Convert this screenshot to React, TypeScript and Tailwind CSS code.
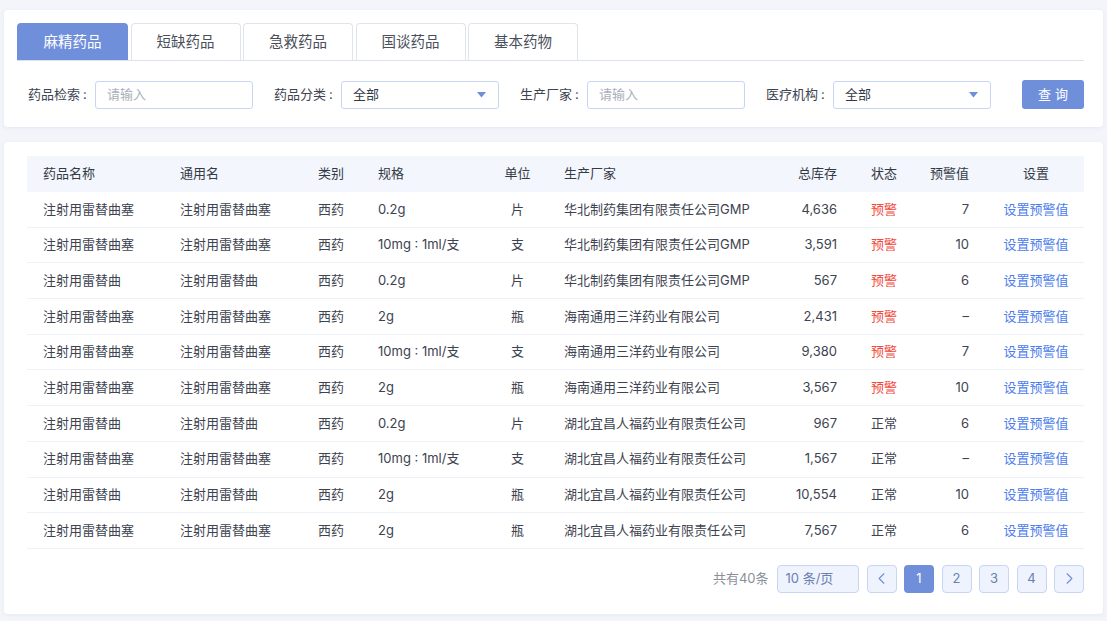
import { ChevronLeft, ChevronRight } from 'lucide-react';

const tabs = ['麻精药品', '短缺药品', '急救药品', '国谈药品', '基本药物'];

type Row = {
  name: string;
  generic: string;
  kind: string;
  spec: string;
  unit: string;
  maker: string;
  stock: string;
  warn: boolean;
  limit: string;
};

const rows: Row[] = [
  { name: '注射用雷替曲塞', generic: '注射用雷替曲塞', kind: '西药', spec: '0.2g', unit: '片', maker: '华北制药集团有限责任公司GMP', stock: '4,636', warn: true, limit: '7' },
  { name: '注射用雷替曲塞', generic: '注射用雷替曲塞', kind: '西药', spec: '10mg : 1ml/支', unit: '支', maker: '华北制药集团有限责任公司GMP', stock: '3,591', warn: true, limit: '10' },
  { name: '注射用雷替曲', generic: '注射用雷替曲', kind: '西药', spec: '0.2g', unit: '片', maker: '华北制药集团有限责任公司GMP', stock: '567', warn: true, limit: '6' },
  { name: '注射用雷替曲塞', generic: '注射用雷替曲塞', kind: '西药', spec: '2g', unit: '瓶', maker: '海南通用三洋药业有限公司', stock: '2,431', warn: true, limit: '–' },
  { name: '注射用雷替曲塞', generic: '注射用雷替曲塞', kind: '西药', spec: '10mg : 1ml/支', unit: '支', maker: '海南通用三洋药业有限公司', stock: '9,380', warn: true, limit: '7' },
  { name: '注射用雷替曲塞', generic: '注射用雷替曲塞', kind: '西药', spec: '2g', unit: '瓶', maker: '海南通用三洋药业有限公司', stock: '3,567', warn: true, limit: '10' },
  { name: '注射用雷替曲', generic: '注射用雷替曲', kind: '西药', spec: '0.2g', unit: '片', maker: '湖北宜昌人福药业有限责任公司', stock: '967', warn: false, limit: '6' },
  { name: '注射用雷替曲塞', generic: '注射用雷替曲塞', kind: '西药', spec: '10mg : 1ml/支', unit: '支', maker: '湖北宜昌人福药业有限责任公司', stock: '1,567', warn: false, limit: '–' },
  { name: '注射用雷替曲', generic: '注射用雷替曲', kind: '西药', spec: '2g', unit: '瓶', maker: '湖北宜昌人福药业有限责任公司', stock: '10,554', warn: false, limit: '10' },
  { name: '注射用雷替曲塞', generic: '注射用雷替曲塞', kind: '西药', spec: '2g', unit: '瓶', maker: '湖北宜昌人福药业有限责任公司', stock: '7,567', warn: false, limit: '6' },
];

const gridCols = 'grid grid-cols-[137px_138px_60px_125px_61px_212px_93px_62px_70px_1fr] items-center';

function Field({ label, placeholder, select }: { label: string; placeholder?: string; select?: boolean }) {
  return (
    <div className="flex items-center">
      <span className="text-[13px] text-[#3d4350] w-[67px] whitespace-nowrap">
        {label}
        <span className="ml-[3px]">:</span>
      </span>
      <div className="w-[158px] h-[28px] border border-[#c8d5f3] rounded-[3px] bg-white flex items-center justify-between px-[11px]">
        {select ? (
          <>
            <span className="text-[13px] text-[#333a46]">全部</span>
            <svg width="9" height="6" viewBox="0 0 9 6" className="mr-[1px]">
              <path d="M0 0 H9 L4.5 5.5 Z" fill="#6f8fda" />
            </svg>
          </>
        ) : (
          <span className="text-[13px] text-[#a9afba]">{placeholder}</span>
        )}
      </div>
    </div>
  );
}

export default function App() {
  return (
    <div
      className="min-h-screen bg-[#f3f5fa] pt-[10px] px-[4px] pb-[7px]"
      style={{ fontFamily: 'Inter, "Noto Sans CJK SC", sans-serif' }}
    >
      <div className="bg-white rounded-[4px] shadow-[0_1px_4px_rgba(120,140,190,0.12)] pt-[13px] pl-[13px] pr-[19px] h-[117px]">
        <div className="flex gap-[2.5px] border-b border-[#dde2ec] h-[38px]">
          {tabs.map((t, i) => (
            <div
              key={t}
              className={
                i === 0
                  ? 'w-[111px] h-[37px] flex items-center justify-center rounded-t-[4px] bg-[#6f8fda] text-white text-[14.5px]'
                  : 'w-[110px] h-[37px] flex items-center justify-center rounded-t-[4px] border border-b-0 border-[#e0e4ec] bg-white text-[#4a4f5a] text-[14.5px]'
              }
            >
              {t}
            </div>
          ))}
        </div>
        <div className="flex items-center mt-[19px] pl-[11px] gap-[21px]">
          <Field label="药品检索" placeholder="请输入" />
          <Field label="药品分类" select />
          <Field label="生产厂家" placeholder="请输入" />
          <Field label="医疗机构" select />
          <button className="ml-auto w-[62px] h-[29px] rounded-[3px] bg-[#6f8fda] text-white text-[13px] tracking-[4px] pl-[4px]">
            查询
          </button>
        </div>
      </div>

      <div className="mt-[15px] bg-white rounded-[4px] shadow-[0_1px_4px_rgba(120,140,190,0.12)] pt-[14px] pl-[23px] pr-[19px] h-[472px]">
        <div className="text-[13px] text-[#3d4350]">
          <div className={`${gridCols} h-[36px] bg-[#f3f6fc] text-[#333a46]`}>
            <div className="pl-[16px]">药品名称</div>
            <div className="pl-[16px]">通用名</div>
            <div className="pl-[16px]">类别</div>
            <div className="pl-[16px]">规格</div>
            <div className="text-center">单位</div>
            <div className="pl-[16px]">生产厂家</div>
            <div className="text-right pr-[16px]">总库存</div>
            <div className="pl-[18px]">状态</div>
            <div className="text-right pr-[16px]">预警值</div>
            <div className="text-center pl-[3px]">设置</div>
          </div>
          {rows.map((r, i) => (
            <div key={i} className={`${gridCols} h-[35.7px] border-b border-[#eef1f7]`}>
              <div className="pl-[16px]">{r.name}</div>
              <div className="pl-[16px]">{r.generic}</div>
              <div className="pl-[16px]">{r.kind}</div>
              <div className="pl-[16px] whitespace-nowrap">{r.spec}</div>
              <div className="text-center">{r.unit}</div>
              <div className="pl-[16px] whitespace-nowrap">{r.maker}</div>
              <div className="text-right pr-[16px]">{r.stock}</div>
              <div className={r.warn ? 'pl-[18px] text-[#f2473a]' : 'pl-[18px]'}>{r.warn ? '预警' : '正常'}</div>
              <div className="text-right pr-[16px]">{r.limit}</div>
              <div className="text-center pl-[3px] text-[#4c7ded]">设置预警值</div>
            </div>
          ))}
        </div>

        <div className="flex items-center justify-end mt-[16px] text-[13px]">
          <span className="text-[#8a8f99] mr-[8px]">共有40条</span>
          <div className="w-[82px] h-[28px] rounded-[4px] border border-[#c8d5f3] bg-[#eef3fd] text-[#6b7fb0] flex items-center pl-[8px] mr-[8px]">
            10 条/页
          </div>
          <div className="flex gap-[7.5px]">
            <div className="w-[30px] h-[28px] rounded-[4px] border border-[#c8d5f3] bg-[#eef3fd] flex items-center justify-center text-[#6f8fda]">
              <ChevronLeft size={19} strokeWidth={1.4} />
            </div>
            {['1', '2', '3', '4'].map((p) => (
              <div
                key={p}
                className={
                  p === '1'
                    ? 'w-[30px] h-[28px] rounded-[4px] bg-[#6f8fda] text-white flex items-center justify-center'
                    : 'w-[30px] h-[28px] rounded-[4px] border border-[#c8d5f3] bg-[#eef3fd] text-[#6b7fb0] flex items-center justify-center'
                }
              >
                {p}
              </div>
            ))}
            <div className="w-[30px] h-[28px] rounded-[4px] border border-[#c8d5f3] bg-[#eef3fd] flex items-center justify-center text-[#6f8fda]">
              <ChevronRight size={19} strokeWidth={1.4} />
            </div>
          </div>
        </div>
      </div>
    </div>
  );
}
